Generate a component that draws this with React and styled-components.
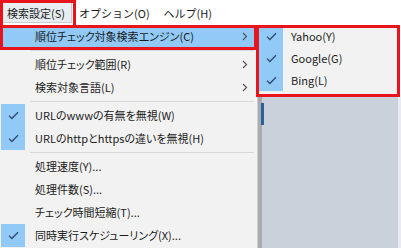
import React from 'react';
import styled, { createGlobalStyle } from 'styled-components';

const Global = createGlobalStyle`
  html, body { margin: 0; padding: 0; background: #fff; }
  body { font-family: "Noto Sans CJK JP", "Noto Sans", sans-serif; }
`;

const Screen = styled.div`
  position: relative;
  width: 401px;
  height: 248px;
  overflow: hidden;
  background: #fff;
  font-family: "Noto Sans CJK JP", "Noto Sans", sans-serif;
  font-size: 11px;
  color: #1b1b1b;
  font-feature-settings: "palt";
  display: flex;
  flex-direction: column;
`;

const MenuBar = styled.div`
  display: flex;
  align-items: center;
  height: 25px;
  padding-left: 0;
  background: #fff;
  flex: none;
  font-feature-settings: normal;
`;

const BarItem = styled.div`
  height: 19px;
  padding: 0 6px;
  display: flex;
  align-items: center;
  white-space: nowrap;
  border: 1px solid ${p => (p.$open ? '#c4ced8' : 'transparent')};
  background: ${p => (p.$open ? '#e8edf2' : 'transparent')};
`;

const Body = styled.div`
  display: flex;
  flex: 1;
  min-height: 0;
`;

const Menu = styled.div`
  width: 257px;
  flex: none;
  background: #f2f2f2;
  border-right: 1px solid #cfcfcf;
  display: flex;
  flex-direction: column;
`;

const Item = styled.div`
  height: ${p => p.$h || 23}px;
  flex: none;
  display: flex;
  align-items: center;
  padding-left: 1px;
  background: ${p => (p.$active ? '#91c9f7' : 'transparent')};
`;

const CheckCell = styled.div`
  width: 24px;
  align-self: stretch;
  flex: none;
  display: flex;
  align-items: center;
  justify-content: center;
  background: ${p => (p.$checked ? '#91c9f7' : 'transparent')};
`;

const Label = styled.span`
  flex: 1;
  padding-left: ${p => p.$pad || 10}px;
  white-space: nowrap;
  line-height: 1;
`;

const Arrow = styled.span`
  width: 13px;
  flex: none;
  display: flex;
  align-items: center;
  margin-right: 2px;
`;

const Separator = styled.div`
  height: 5px;
  flex: none;
  display: flex;
  align-items: center;
  padding-left: 30px;
  padding-right: 3px;
  &::after {
    content: '';
    flex: 1;
    border-top: 1px solid #d8d8d8;
  }
`;

const Side = styled.div`
  flex: 1;
  display: flex;
  flex-direction: column;
`;

const SubRow = styled.div`
  display: flex;
  height: 72px;
  flex: none;
  background: #fff;
`;

const SubMenu = styled.div`
  width: 140px;
  flex: none;
  background: #f2f2f2;
  display: flex;
  flex-direction: column;
`;

const AppArea = styled.div`
  flex: 1;
  display: flex;
`;

const WindowEdge = styled.div`
  width: 4px;
  flex: none;
  background: #a9abae;
`;

const Pane = styled.div`
  flex: 1;
  background: #c9d1da;
  border-right: 3px solid #e9ebee;
`;

const Tab = styled.div`
  width: 3px;
  height: 22px;
  margin-top: 6px;
  margin-left: -1px;
  background: #2c5f9c;
`;

const Annot = styled.div`
  position: absolute;
  left: ${p => p.$x}px;
  top: ${p => p.$y}px;
  width: ${p => p.$w}px;
  height: ${p => p.$h}px;
  border: 3px solid #e8131b;
  box-sizing: border-box;
  pointer-events: none;
`;

const Check = () => (
  <svg width="11" height="9" viewBox="0 0 11 9">
    <path d="M1 4.6 L3.9 7.5 L10 1.2" fill="none" stroke="#2f4c6b" strokeWidth="1.3" />
  </svg>
);

const Chevron = () => (
  <svg width="6" height="9" viewBox="0 0 6 9">
    <path d="M1 1 L4.5 4.5 L1 8" fill="none" stroke="#555" strokeWidth="1.2" />
  </svg>
);

const MenuItem = ({ label, checked, arrow, active }) => (
  <Item $active={active}>
    <CheckCell $checked={checked}>{checked && <Check />}</CheckCell>
    <Label>{label}</Label>
    <Arrow>{arrow && <Chevron />}</Arrow>
  </Item>
);

export default function App() {
  return (
    <>
      <Global />
      <Screen>
        <MenuBar>
          <BarItem $open>検索設定(S)</BarItem>
          <BarItem>オプション(O)</BarItem>
          <BarItem>ヘルプ(H)</BarItem>
        </MenuBar>
        <Body>
          <Menu>
            <MenuItem label="順位チェック対象検索エンジン(C)" arrow active />
            <Separator />
            <MenuItem label="順位チェック範囲(R)" arrow />
            <MenuItem label="検索対象言語(L)" arrow />
            <Separator />
            <MenuItem label="URLのwwwの有無を無視(W)" checked />
            <MenuItem label="URLのhttpとhttpsの違いを無視(H)" checked />
            <Separator />
            <MenuItem label="処理速度(Y)..." />
            <MenuItem label="処理件数(S)..." />
            <MenuItem label="チェック時間短縮(T)..." />
            <MenuItem label="同時実行スケジューリング(X)..." checked />
          </Menu>
          <Side>
            <SubRow>
              <SubMenu>
                {['Yahoo(Y)', 'Google(G)', 'Bing(L)'].map(t => (
                  <Item key={t} $h={22}>
                    <CheckCell $checked><Check /></CheckCell>
                    <Label $pad={8}>{t}</Label>
                  </Item>
                ))}
              </SubMenu>
            </SubRow>
            <AppArea>
              <WindowEdge />
              <Pane>
                <Tab />
              </Pane>
            </AppArea>
          </Side>
        </Body>
        <Annot $x={0} $y={0} $w={76} $h={28} />
        <Annot $x={0} $y={25} $w={257} $h={25} />
        <Annot $x={256} $y={25} $w={144} $h={72} />
      </Screen>
    </>
  );
}
